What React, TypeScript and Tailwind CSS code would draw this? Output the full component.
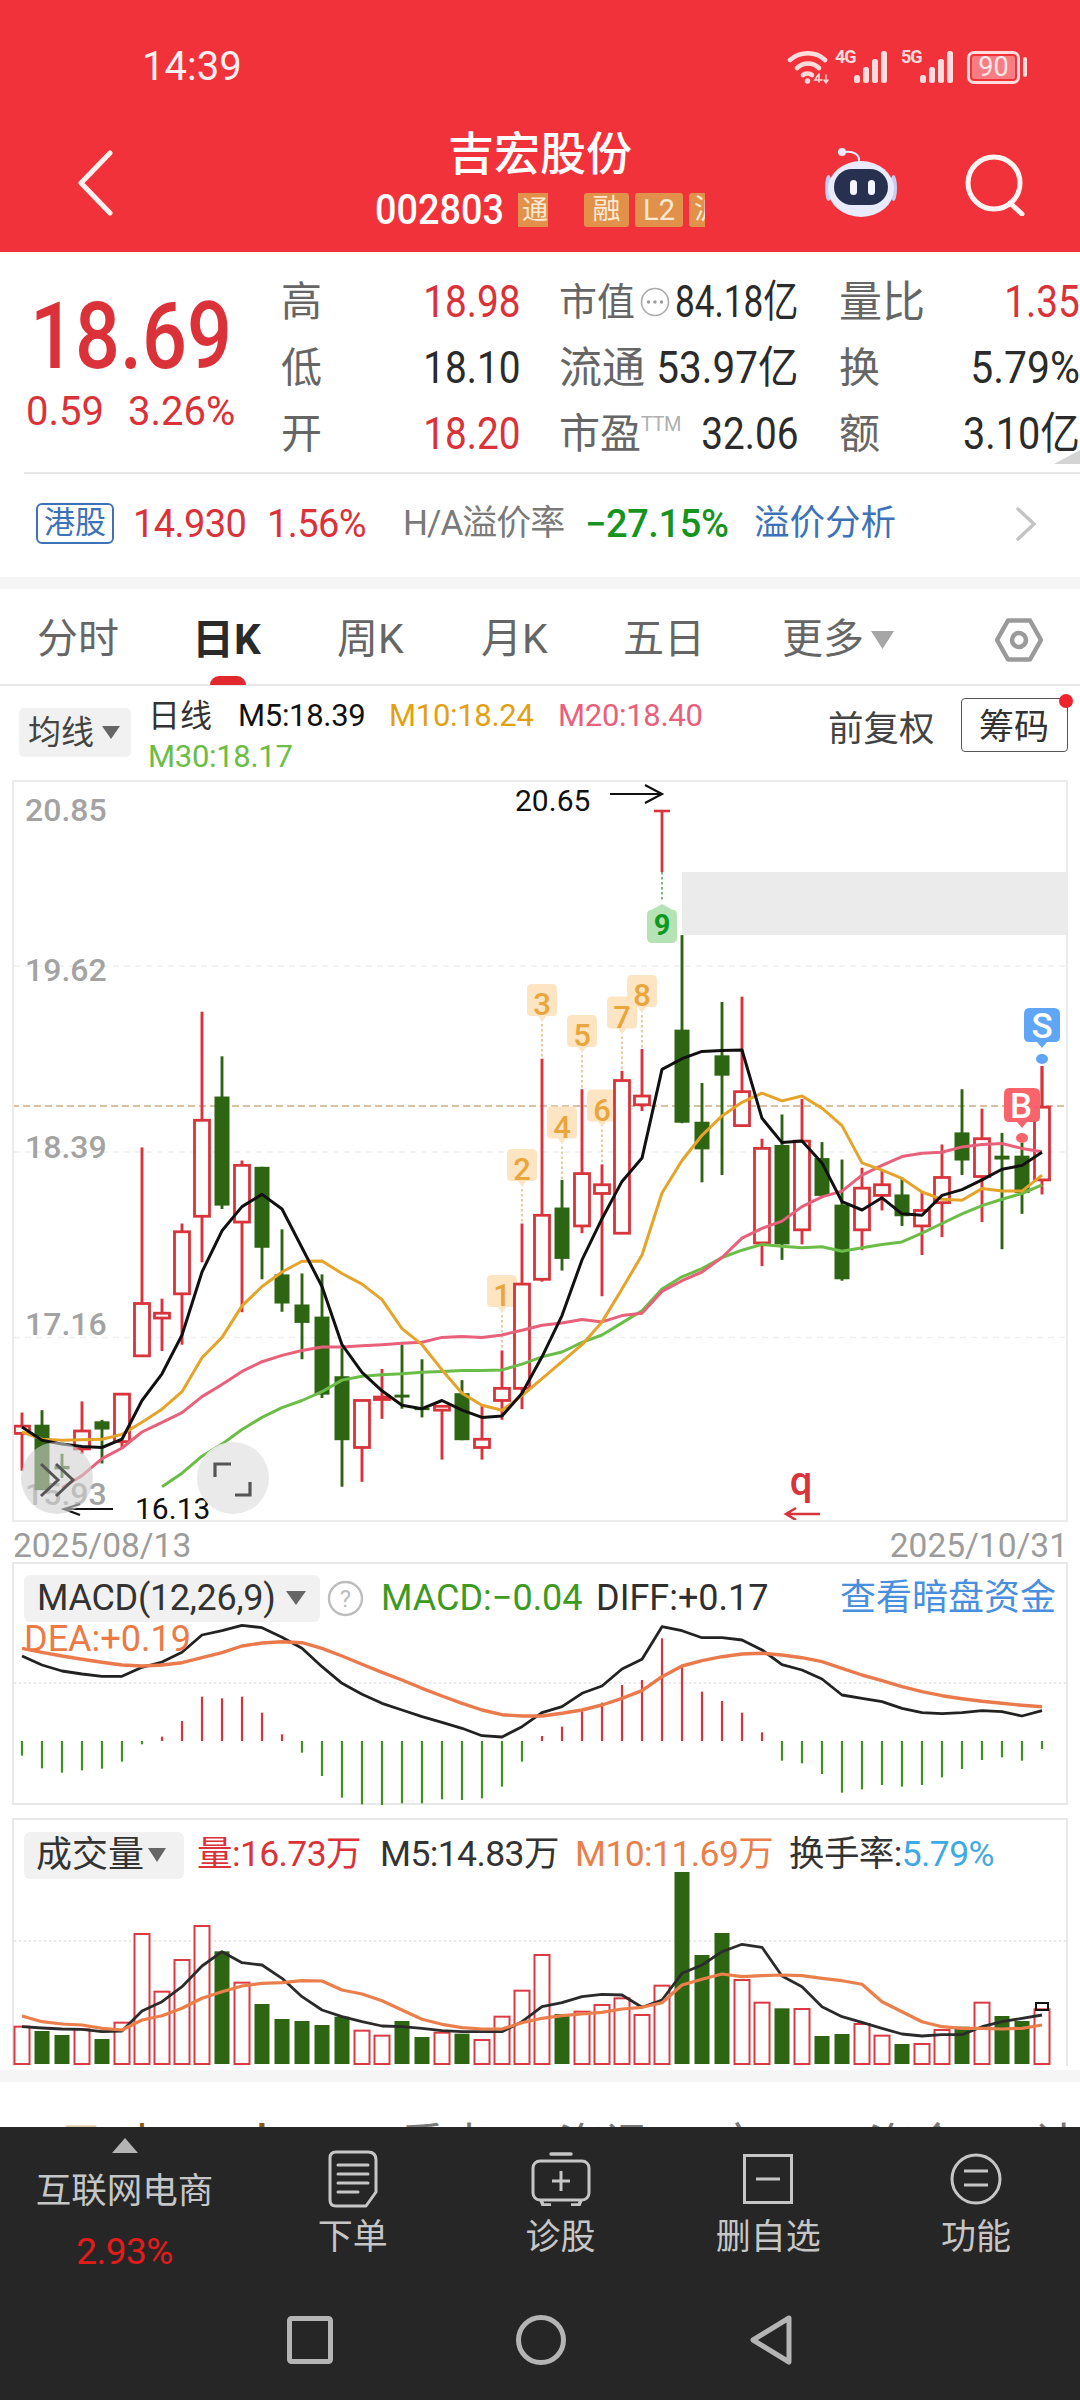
import React from 'react';

const RED = '#d8343c';
const GREEN = '#2e6513';
const cx = (i: number) => 22 + 20 * i;
const my = (z: number) => 780 + z / 2.063;
const dy = (z: number) => 1560 + z / 3;
const vy = (z: number) => 1810 + z / 3;
const pts = (arr: number[], f: (z: number) => number, start = 0) =>
  arr.map((z, k) => `${cx(k + start)},${f(z).toFixed(1)}`).join(' ');

type C = [string, number, number, number, number];
const candles: (C | null)[] = [
  ['r', 1305, 1425, 1333, 1348], ['g', 1300, 1465, 1330, 1465], ['g', 1390, 1440, 1415, 1422], ['r', 1282, 1390, 1343, 1380],
  ['g', 1320, 1410, 1323, 1340], ['r', 1267, 1380, 1267, 1365], ['r', 758, 1190, 1080, 1188], ['r', 1070, 1178, 1100, 1110],
  ['r', 915, 1165, 932, 1060], ['r', 478, 995, 702, 900], ['g', 570, 885, 653, 878], ['r', 785, 1098, 795, 912],
  ['g', 798, 1030, 798, 965], ['g', 927, 1097, 1020, 1080], ['g', 1018, 1195, 1082, 1120], ['g', 1020, 1275, 1107, 1268],
  ['g', 1170, 1458, 1230, 1362], ['r', 1278, 1448, 1280, 1377], ['r', 1215, 1318, 1273, 1278], ['g', 1165, 1297, 1268, 1274],
  ['g', 1195, 1315, 1295, 1300], ['r', 1292, 1402, 1292, 1300], ['g', 1238, 1362, 1265, 1362], ['r', 1290, 1402, 1360, 1377],
  ['r', 1177, 1320, 1255, 1280], ['r', 915, 1298, 1040, 1255], ['r', 575, 1035, 898, 1030], ['g', 825, 1012, 882, 988],
  ['r', 638, 935, 812, 920], ['r', 793, 1065, 835, 853], ['r', 600, 935, 620, 935], ['r', 555, 683, 652, 670],
  null, ['g', 320, 708, 515, 707], ['g', 625, 830, 705, 762], ['g', 458, 815, 568, 610],
  ['r', 447, 715, 643, 713], ['r', 740, 1003, 760, 955], ['g', 690, 990, 753, 958], ['r', 658, 958, 745, 928],
  ['g', 747, 860, 780, 858], ['g', 783, 1033, 876, 1030], ['r', 800, 970, 842, 928], ['r', 805, 888, 835, 857],
  ['g', 820, 920, 855, 900], ['r', 850, 980, 888, 920], ['r', 752, 943, 820, 872], ['g', 638, 815, 727, 785],
  ['r', 678, 912, 740, 818], ['g', 728, 968, 775, 783], ['g', 748, 895, 775, 852], ['r', 590, 855, 675, 825],
];

const m5 = [1335, 1362, 1370, 1375, 1377, 1360, 1280, 1225, 1145, 1015, 930, 880, 855, 885, 965, 1045, 1165, 1222, 1260, 1290, 1297, 1280, 1300, 1315, 1312, 1265, 1190, 1105, 990, 905, 828, 780, 597, 575, 560, 558, 557, 698, 748, 745, 790, 870, 887, 862, 895, 898, 857, 845, 825, 803, 795, 768];
const m10 = [1345, 1360, 1362, 1361, 1360, 1350, 1325, 1298, 1262, 1192, 1150, 1085, 1045, 1015, 993, 992, 1018, 1040, 1072, 1132, 1165, 1217, 1265, 1290, 1300, 1270, 1235, 1200, 1165, 1118, 1050, 980, 852, 785, 733, 693, 665, 646, 662, 652, 677, 713, 790, 805, 822, 850, 865, 867, 843, 848, 848, 815];
const m20 = [1460, 1435, 1400, 1378, 1345, 1325, 1305, 1272, 1247, 1220, 1200, 1187, 1177, 1170, 1170, 1167, 1165, 1162, 1160, 1150, 1148, 1150, 1145, 1135, 1125, 1120, 1113, 1118, 1105, 1100, 1055, 1033, 1015, 985, 945, 925, 910, 880, 860, 848, 815, 795, 777, 770, 768, 757, 752, 750, 760, 767];
const m30 = [1458, 1430, 1395, 1370, 1340, 1315, 1295, 1280, 1262, 1238, 1230, 1227, 1225, 1222, 1220, 1218, 1218, 1217, 1205, 1190, 1180, 1160, 1145, 1120, 1095, 1050, 1025, 1008, 985, 970, 958, 962, 965, 963, 972, 965, 958, 953, 935, 915, 895, 878, 865, 853, 835];

const hist = [587, 625, 638, 631, 626, 605, 553, 530, 483, 410, 415, 410, 458, 523, 578, 648, 713, 733, 735, 730, 730, 718, 720, 715, 680, 605, 528, 500, 452, 428, 375, 360, 235, 317, 395, 423, 458, 517, 602, 610, 642, 698, 688, 675, 680, 675, 652, 627, 600, 592, 602, 567];
const diff = [288, 315, 333, 342, 349, 349, 322, 306, 277, 225, 212, 196, 203, 232, 265, 320, 370, 403, 430, 450, 470, 487, 505, 527, 531, 500, 458, 440, 400, 378, 327, 298, 200, 212, 233, 233, 240, 270, 314, 330, 357, 405, 415, 425, 445, 458, 461, 458, 452, 455, 468, 452];
const dea = [265, 277, 288, 298, 307, 315, 318, 315, 308, 293, 278, 258, 249, 245, 248, 265, 288, 313, 337, 360, 385, 408, 430, 450, 464, 468, 468, 460, 450, 435, 415, 392, 350, 318, 302, 290, 282, 280, 285, 293, 305, 325, 345, 362, 380, 395, 407, 416, 424, 430, 436, 440];

const vols: [string, number][] = ([
  ['r', 650], ['g', 663], ['g', 675], ['r', 658], ['g', 687], ['r', 638], ['r', 372], ['r', 545], ['r', 450], ['r', 348], ['g', 424], ['r', 518], ['g', 582],
  ['g', 627], ['g', 633], ['g', 645], ['g', 620], ['r', 662], ['r', 677], ['g', 633], ['g', 681], ['r', 668], ['g', 671], ['r', 690], ['r', 620], ['r', 542],
  ['r', 435], ['g', 612], ['r', 605], ['r', 585], ['r', 565], ['r', 615], ['r', 527], ['g', 186], ['g', 435], ['g', 369], ['r', 510], ['r', 578], ['g', 595],
  ['r', 597], ['g', 678], ['g', 672], ['r', 642], ['r', 677], ['g', 702], ['r', 702], ['r', 660], ['g', 650], ['r', 578], ['g', 618], ['g', 633], ['r', 598],
] as [string, number][]);
const vm5 = [650, 654, 657, 658, 665, 663, 603, 575, 530, 468, 425, 458, 465, 505, 560, 600, 620, 635, 648, 650, 655, 662, 665, 665, 665, 635, 590, 578, 560, 553, 555, 592, 570, 490, 465, 425, 403, 412, 498, 530, 590, 620, 637, 655, 672, 678, 674, 674, 650, 635, 625, 615];
const vm10 = [618, 635, 642, 645, 655, 660, 630, 617, 595, 565, 545, 528, 520, 518, 512, 513, 540, 552, 572, 600, 628, 643, 653, 657, 657, 638, 625, 617, 612, 607, 597, 592, 578, 525, 508, 492, 500, 497, 495, 497, 505, 512, 523, 575, 605, 635, 650, 655, 655, 657, 655, 645];

const tags: [string, number, number, number][] = [
  ['1', 24, 1295, 1177], ['2', 25, 1169, 915], ['3', 26, 1004, 575], ['4', 27, 1126.6, 825],
  ['5', 28, 1035, 638], ['6', 29, 1109.6, 793], ['7', 30, 1016.5, 600], ['8', 31, 995, 555],
];

function MainChart() {
  return (
    <svg viewBox="12 780 1056 742" width="1056" height="742" className="block">
      <rect x="682" y="872" width="386" height="63" fill="#ebebeb" />
      {[966, 1152, 1337.5].map((y) => (
        <line key={y} x1="14" x2="1066" y1={y} y2={y} stroke="#eeeeee" strokeWidth="1.5" strokeDasharray="6 5" />
      ))}
      <line x1="12" x2="1068" y1="1106" y2="1106" stroke="#c9ad86" strokeWidth="1.5" strokeDasharray="7 4" />
      <g fontFamily="Roboto, sans-serif" fontSize="32" fill="#a3a3a3" fontWeight="500">
        <text x="25" y="821">20.85</text>
        <text x="25" y="981">19.62</text>
        <text x="25" y="1158">18.39</text>
        <text x="25" y="1335">17.16</text>
        <text x="25" y="1505">15.93</text>
      </g>
      {tags.map(([t, i, c, w]) => (
        <g key={t}>
          <line x1={cx(i)} x2={cx(i)} y1={c + 20} y2={my(w)} stroke="#d9a860" strokeWidth="1.2" strokeDasharray="2.5 2.5" />
          <path d={`M${cx(i) - 15} ${c - 15} q0 -5 5 -5 h20 q5 0 5 5 v23 q0 4 -4 4 h-7 l-4 6 l-4 -6 h-7 q-4 0 -4 -4 z`} fill="#fde4c2" />
          <text x={cx(i)} y={c + 11} textAnchor="middle" fontFamily="Roboto, sans-serif" fontWeight="500" fontSize="31" fill="#e8a63c">{t}</text>
        </g>
      ))}
      <line x1="662" x2="662" y1="872" y2="902" stroke="#1f8a2b" strokeWidth="1.2" strokeDasharray="2.5 2.5" />
      <path d="M647 915 q0 -5 4 -5 l11 -6 l11 6 q4 0 4 5 v23 q0 5 -5 5 h-20 q-5 0 -5 -5 z" fill="#b6e3b6" />
      <text x="662" y="935" textAnchor="middle" fontFamily="Roboto, sans-serif" fontWeight="700" fontSize="29" fill="#0a9a1f">9</text>
      <line x1="662" x2="662" y1="811" y2="872" stroke={RED} strokeWidth="2.8" />
      <line x1="654" x2="670" y1="811" y2="811" stroke={RED} strokeWidth="2.6" />
      {candles.map((c, i) => {
        if (!c) return null;
        const [k, hi, lo, top, bot] = c;
        const col = k === 'r' ? RED : GREEN;
        const t = my(top);
        const b = my(bot);
        return (
          <g key={i}>
            <line x1={cx(i)} x2={cx(i)} y1={my(hi)} y2={my(lo)} stroke={col} strokeWidth="2.9" />
            <rect
              x={cx(i) - 7.5}
              y={t}
              width="15"
              height={Math.max(b - t, 1)}
              fill={k === 'r' ? '#ffffff' : GREEN}
              stroke={k === 'r' ? RED : 'none'}
              strokeWidth="2.8"
            />
          </g>
        );
      })}
      <polyline points={pts(m30, my, 7)} fill="none" stroke="#6bbd48" strokeWidth="3" strokeLinejoin="round" />
      <polyline points={pts(m20, my, 2)} fill="none" stroke="#e9607a" strokeWidth="3" strokeLinejoin="round" />
      <polyline points={pts(m10, my)} fill="none" stroke="#e6a32a" strokeWidth="3" strokeLinejoin="round" />
      <polyline points={pts(m5, my)} fill="none" stroke="#111111" strokeWidth="3" strokeLinejoin="round" />
      <text x="515" y="811" fontFamily="Roboto, sans-serif" fontSize="30" fill="#111111">20.65</text>
      <path d="M610 794 H662 M645 785 L662 794 L645 803" fill="none" stroke="#111111" strokeWidth="2.2" />
      <text x="135" y="1519" fontFamily="Roboto, sans-serif" fontSize="30" fill="#111111">16.13</text>
      <path d="M113 1509 H64 M80 1504 L64 1509 L80 1515" fill="none" stroke="#111111" strokeWidth="2.2" />
      <text x="801" y="1495" textAnchor="middle" fontFamily="Roboto, sans-serif" fontWeight="500" fontSize="40" fill={RED}>q</text>
      <path d="M820 1514 H786 M796 1508 L786 1514 L796 1520" fill="none" stroke={RED} strokeWidth="2.6" />
      <path d="M1029 1008 h25 q6 0 6 6 v23 q0 5 -5 5 h-8 l-5 6 l-5 -6 h-8 q-5 0 -5 -5 v-23 q0 -6 5 -6 z" fill="#5fa6f7" />
      <text x="1042" y="1038" textAnchor="middle" fontFamily="Roboto, sans-serif" fontWeight="500" fontSize="35" fill="#ffffff">S</text>
      <ellipse cx="1042" cy="1059" rx="6" ry="5" fill="#5fa6f7" />
      <path d="M1009 1088 h25 q6 0 6 6 v23 q0 5 -5 5 h-8 l-5 6 l-5 -6 h-8 q-5 0 -5 -5 v-23 q0 -6 5 -6 z" fill="#f8636c" />
      <text x="1021" y="1118" textAnchor="middle" fontFamily="Roboto, sans-serif" fontWeight="500" fontSize="35" fill="#ffffff">B</text>
      <ellipse cx="1022" cy="1138" rx="6" ry="5" fill="#f8636c" />
      <line x1="1042" x2="1042" y1="1066" y2="1106" stroke={RED} strokeWidth="2.7" />
      <circle cx="57" cy="1478" r="36" fill="#d0d0d0" fillOpacity="0.6" />
      <path d="M41 1464 L58 1480 L41 1496 M56 1464 L73 1480 L56 1496" fill="none" stroke="#555555" strokeWidth="3" />
      <circle cx="233" cy="1478" r="36" fill="#e9e9e9" fillOpacity="0.95" />
      <path d="M231 1464 H215 V1477 M235 1495 H250 V1482" fill="none" stroke="#555555" strokeWidth="3.2" />
    </svg>
  );
}

function MacdChart() {
  return (
    <svg viewBox="12 1562 1056 243" width="1056" height="243" className="block">
      <line x1="14" x2="1066" y1="1683" y2="1683" stroke="#e2e2e2" strokeWidth="1.5" strokeDasharray="2 3" />
      {hist.map((z, i) => (
        <line key={i} x1={cx(i)} x2={cx(i)} y1={dy(543)} y2={dy(z)} stroke={z < 543 ? '#d8343c' : '#3f8f22'} strokeWidth="2.2" />
      ))}
      <polyline points={pts(diff, dy)} fill="none" stroke="#222222" strokeWidth="2.8" strokeLinejoin="round" />
      <polyline points={pts(dea, dy)} fill="none" stroke="#ea7a4b" strokeWidth="3.4" strokeLinejoin="round" />
    </svg>
  );
}

function VolumeChart() {
  return (
    <svg viewBox="12 1818 1056 248" width="1056" height="248" className="block">
      <line x1="14" x2="1066" y1="1941" y2="1941" stroke="#e2e2e2" strokeWidth="1.5" strokeDasharray="2 3" />
      {vols.map(([k, z], i) => {
        const t = vy(z);
        const b = vy(762);
        return (
          <rect
            key={i}
            x={cx(i) - 7.5}
            y={t}
            width="15"
            height={b - t}
            fill={k === 'r' ? '#ffffff' : GREEN}
            stroke={k === 'r' ? '#dc3a42' : 'none'}
            strokeWidth="2"
          />
        );
      })}
      <polyline points={pts(vm5, vy)} fill="none" stroke="#2b2b2b" strokeWidth="2.8" strokeLinejoin="round" />
      <polyline points={pts(vm10, vy)} fill="none" stroke="#ea7f4b" strokeWidth="3.2" strokeLinejoin="round" />
      <rect x="1036" y="2003" width="12" height="7" fill="none" stroke="#111111" strokeWidth="2" />
    </svg>
  );
}

function Robot() {
  return (
    <svg width="72" height="70" viewBox="0 0 72 70">
      <path d="M34 14 C35 6 28 3 20 4" fill="none" stroke="#eef0ff" strokeWidth="2" />
      <circle cx="17" cy="4" r="4" fill="#e9ebff" />
      <ellipse cx="3.5" cy="40" rx="3.5" ry="13" fill="#c9cdf5" />
      <ellipse cx="68.5" cy="40" rx="3.5" ry="13" fill="#c9cdf5" />
      <ellipse cx="36" cy="41" rx="33" ry="28" fill="#e9ebfd" />
      <rect x="9" y="21" width="54" height="36" rx="18" fill="#27304e" />
      <rect x="25" y="32" width="7" height="15" rx="3.5" fill="#f4f6ff" />
      <rect x="43" y="32" width="7" height="15" rx="3.5" fill="#f4f6ff" />
    </svg>
  );
}

function Signal({ label }: { label: string }) {
  return (
    <div className="relative w-[53px] h-[34px]">
      <span className="absolute left-0 top-[-3px] text-[18px] font-bold leading-[20px] tracking-[-1px] text-[#ffdcdc]">{label}</span>
      <svg width="34" height="32" viewBox="0 0 34 32" className="absolute right-0 top-[1px]">
        <g fill="#ffdcdc">
          <rect x="0" y="24" width="6" height="8" rx="2.5" />
          <rect x="9" y="16" width="6" height="16" rx="2.5" />
          <rect x="18" y="8" width="6" height="24" rx="2.5" />
          <rect x="27" y="0" width="6" height="32" rx="2.5" />
        </g>
      </svg>
    </div>
  );
}

function Wifi() {
  return (
    <svg width="42" height="36" viewBox="0 0 42 36" fill="none" stroke="#ffdcdc" strokeWidth="4.6" strokeLinecap="round">
      <path d="M3 11 C13 2 29 2 38 11" />
      <path d="M10 19 C16 13 26 13 32 19" />
      <path d="M16 26 C18 24 23 24 25 26" />
      <circle cx="20.5" cy="32" r="2" fill="#ffdcdc" strokeWidth="1.5" />
      <path d="M31 26 L28 31 H35 M32 33 V25" strokeWidth="1.6" />
      <path d="M39 26 V33 M37 31 L39 34 L41 31" strokeWidth="1.4" />
    </svg>
  );
}

function Row({ label, value, red, big, sx = 'scale-x-[.88]' }: { label: React.ReactNode; value: string; red?: boolean; big?: boolean; sx?: string }) {
  return (
    <div className="flex items-center justify-between h-[66px] whitespace-nowrap">
      <span className={big ? 'text-[43px] text-[#666666] leading-none shrink-0' : 'text-[41px] text-[#666666] leading-none shrink-0'}>{label}</span>
      <span className={(red ? 'text-[#db3138] ' : 'text-[#2b2b2b] ') + sx + ' origin-right text-[44px] leading-none shrink-0'}>{value}</span>
    </div>
  );
}

function Tab({ w, children, active }: { w: string; children: React.ReactNode; active?: boolean }) {
  return (
    <div className={w + ' relative h-full flex items-center shrink-0'}>
      <span className={active ? 'text-[42px] font-bold text-[#2a2a2a] leading-none' : 'text-[41px] text-[#666666] leading-none'}>{children}</span>
    </div>
  );
}

function ToolItem({ icon, label }: { icon: React.ReactNode; label: string }) {
  return (
    <div className="flex flex-col items-center">
      <div className="h-[60px] flex items-center justify-center mt-[22px]">{icon}</div>
      <span className="mt-[8px] text-[35px] leading-[42px] text-[#c6c6c6]">{label}</span>
    </div>
  );
}

export default function App() {
  const font = "font-['Roboto','Noto_Sans_CJK_SC',sans-serif]";
  return (
    <div className={font + ' w-[1080px] h-[2400px] flex flex-col bg-white overflow-hidden'}>
      <header className="h-[252px] bg-[#f2323a] flex flex-col shrink-0">
        <div className="h-[132px] flex items-center pl-[142px] pt-[2px]">
          <span className="text-[40px] text-[#fff0ee] leading-none w-[645px]">14:39</span>
          <Wifi />
          <div className="ml-[6px] flex gap-[2px] items-center">
            <Signal label="4G" />
            <div className="w-[9px]" />
            <Signal label="5G" />
          </div>
          <div className="ml-[13px] w-[53px] h-[33px] border-[3px] border-[#ffdcdc] rounded-[7px] flex items-center justify-center p-[2px]">
            <span className="w-full h-full bg-[#f87c82] rounded-[2px] flex items-center justify-center text-[27px] text-[#ffe8e8] leading-none">90</span>
          </div>
          <div className="ml-[3px] w-[4px] h-[20px] rounded-full bg-[#ffdcdc]" />
        </div>
        <div className="h-[120px] flex items-start">
          <div className="w-[240px] pl-[77px] pt-[18px] shrink-0">
            <svg width="36" height="66" viewBox="0 0 36 66" fill="none" stroke="#fff2f0" strokeWidth="5" strokeLinecap="round" strokeLinejoin="round">
              <path d="M33 3 L4 33 L33 63" />
            </svg>
          </div>
          <div className="flex-1 flex flex-col items-center">
            <span className="mt-[-2px] text-[46px] leading-[48px] text-white font-medium">吉宏股份</span>
            <div className="mt-[14px] w-[330px] h-[36px] flex items-center overflow-hidden shrink-0">
              <span className="text-[42px] leading-none font-medium text-white scale-x-[.9] origin-left w-[143px] shrink-0">002803</span>
              <span className="w-[30px] h-[34px] bg-[#e2914a] text-[#fbe9d3] text-[26px] leading-[34px] flex justify-end overflow-hidden shrink-0">通</span>
              <span className="ml-[36px] w-[45px] h-[34px] rounded-[3px] bg-[#e2914a] text-[#fbe9d3] text-[28px] leading-[34px] text-center shrink-0">融</span>
              <span className="ml-[6px] w-[48px] h-[34px] rounded-[3px] bg-[#e2914a] text-[#fbe9d3] text-[29px] leading-[34px] text-center shrink-0">L2</span>
              <span className="ml-[6px] w-[44px] h-[34px] rounded-[3px] bg-[#e2914a] text-[#fbe9d3] text-[28px] leading-[34px] pl-[5px] shrink-0">沪</span>
            </div>
          </div>
          <div className="w-[240px] flex pt-[16px] shrink-0">
            <div className="-ml-[15px] shrink-0"><Robot /></div>
            <svg className="ml-[68px] mt-[6px] shrink-0" width="62" height="62" viewBox="0 0 62 62" fill="none" stroke="#fff4f2" strokeWidth="5">
              <circle cx="29" cy="29" r="26" />
              <path d="M45 49 L57 60" strokeLinecap="round" />
            </svg>
          </div>
        </div>
      </header>

      <section className="h-[222px] ml-[24px] flex pt-[17px] border-b-2 border-[#e8e8e8] relative shrink-0">
        <div className="w-[257px] shrink-0 flex flex-col">
          <span className="ml-[6px] mt-[22px] text-[92px] leading-[92px] font-medium text-[#db3138] scale-x-[.86] origin-left whitespace-nowrap">18.69</span>
          <div className="mt-[7px] ml-[2px] flex text-[40px] leading-[44px] text-[#db3138] whitespace-nowrap">
            <span className="w-[102px]">0.59</span>
            <span>3.26%</span>
          </div>
        </div>
        <div className="w-[240px] mr-[38px] shrink-0">
          <Row label="高" value="18.98" red />
          <Row label="低" value="18.10" />
          <Row label="开" value="18.20" red />
        </div>
        <div className="w-[240px] mr-[40px] shrink-0">
          <Row
            label={
              <span className="flex items-center">
                <span className="text-[38px]">市值</span>
                <svg className="ml-[5px]" width="30" height="30" viewBox="0 0 30 30" fill="#9a9a9a" stroke="none">
                  <circle cx="15" cy="15" r="13.5" fill="none" stroke="#aaaaaa" strokeWidth="1.6" />
                  <circle cx="8.5" cy="15" r="1.7" />
                  <circle cx="15" cy="15" r="1.7" />
                  <circle cx="21.5" cy="15" r="1.7" />
                </svg>
              </span>
            }
            value="84.18亿"
            sx="scale-x-[.8] -ml-[45px]"
          />
          <Row big label="流通" value="53.97亿" sx="scale-x-[.92] -ml-[5px]" />
          <Row
            label={
              <span className="flex items-start">
                <span>市盈</span>
                <span className="text-[20px] text-[#b0b0b0] tracking-[-0.5px]">TTM</span>
              </span>
            }
            value="32.06"
          />
        </div>
        <div className="w-[241px] shrink-0">
          <Row big label="量比" value="1.35" red />
          <Row label="换" value="5.79%" sx="scale-x-[.93]" />
          <Row label="额" value="3.10亿" sx="scale-x-[.9]" />
        </div>
        <svg className="absolute right-0 bottom-[8px]" width="26" height="14" viewBox="0 0 26 14">
          <path d="M0 14 L26 14 L26 0 Z" fill="#d4d4d4" />
        </svg>
      </section>

      <div className="h-[103px] flex items-center pl-[36px] pb-[4px] shrink-0 whitespace-nowrap">
        <span className="w-[78px] h-[41px] border-2 border-[#3d72b8] rounded-[6px] text-[#3d72b8] text-[31px] leading-[36px] text-center shrink-0">港股</span>
        <span className="ml-[19px] w-[134px] text-[38px] text-[#db3138] leading-none tracking-[-0.6px] shrink-0">14.930</span>
        <span className="w-[136px] text-[38px] text-[#db3138] leading-none tracking-[-0.6px] shrink-0">1.56%</span>
        <span className="w-[182px] text-[35px] text-[#7a7a7a] leading-none tracking-[-1px] shrink-0">H/A溢价率</span>
        <span className="w-[169px] text-[38px] font-medium text-[#16941f] leading-none tracking-[-0.4px] shrink-0">−27.15%</span>
        <span className="w-[262px] text-[35.5px] text-[#3d72b8] leading-none shrink-0">溢价分析</span>
        <svg width="20" height="34" viewBox="0 0 20 34" fill="none" stroke="#c4c4c4" strokeWidth="3.5" strokeLinecap="round">
          <path d="M2 2 L18 17 L2 32" />
        </svg>
      </div>
      <div className="h-[12px] bg-[#f5f5f5] shrink-0" />

      <div className="h-[97px] flex items-center pl-[37px] border-b-2 border-[#e8e8e8] shrink-0 relative pt-[6px]">
        <Tab w="w-[155px]">分时</Tab>
        <Tab w="w-[145px]" active>
          日K
          <i className="absolute left-[18px] bottom-[-1px] w-[36px] h-[9px] rounded-t-full rounded-b-[2px] bg-[#e1282f] block" />
        </Tab>
        <Tab w="w-[144px]">周K</Tab>
        <Tab w="w-[142px]">月K</Tab>
        <Tab w="w-[159px]">五日</Tab>
        <Tab w="w-[89px]">更多</Tab>
        <svg width="23" height="18" viewBox="0 0 23 18" className="shrink-0"><path d="M0 0 H23 L11.5 18 Z" fill="#a6a6a6" /></svg>
        <svg className="ml-[101px] shrink-0" width="48" height="44" viewBox="0 0 48 44" fill="none" stroke="#9a9a9a" strokeWidth="4.5">
          <path d="M13 2.5 H35 L46 22 L35 41.5 H13 L2 22 Z" strokeLinejoin="round" />
          <circle cx="24" cy="22" r="7" />
        </svg>
      </div>

      <div className="h-[94px] flex items-start shrink-0">
        <div className="ml-[19px] mt-[22px] w-[112px] h-[49px] bg-[#f1f1f1] rounded-[5px] flex items-center pl-[9px] shrink-0">
          <span className="text-[33px] leading-none text-[#444444]">均线</span>
          <svg className="ml-[8px]" width="18" height="13" viewBox="0 0 18 13"><path d="M0 0 H18 L9 13 Z" fill="#666666" /></svg>
        </div>
        <div className="ml-[17px] mt-[12px] w-[560px] flex flex-col shrink-0 whitespace-nowrap">
          <div className="flex text-[31px] leading-[36px] tracking-[-0.3px]">
            <span className="w-[90px] text-[32px] text-[#333333] tracking-normal">日线</span>
            <span className="w-[151px] text-[#111111]">M5:18.39</span>
            <span className="w-[169px] text-[#e3a012]">M10:18.24</span>
            <span className="text-[#ea5f7c]">M20:18.40</span>
          </div>
          <span className="mt-[5px] text-[31px] leading-[36px] tracking-[-0.3px] text-[#6abd45]">M30:18.17</span>
        </div>
        <span className="ml-[120px] mt-[22px] text-[35.5px] leading-[42px] text-[#444444] shrink-0">前复权</span>
        <div className="relative ml-[26px] mt-[12px] w-[107px] h-[54px] pt-[5px] border-[1.5px] border-[#555555] rounded-[4px] flex items-center justify-center text-[35px] leading-none text-[#333333] shrink-0">
          筹码
          <i className="absolute right-[-6px] top-[-5px] w-[14px] h-[14px] rounded-full bg-[#f0222d] block" />
        </div>
      </div>

      <div className="relative mx-[12px] h-[742px] shrink-0 outline-2 outline-[#ebebeb] -outline-offset-2">
        <MainChart />
      </div>
      <div className="h-[40px] pl-[13px] pr-[12px] pt-[7px] flex items-center justify-between text-[33.5px] leading-none text-[#9c9c9c] shrink-0">
        <span>2025/08/13</span>
        <span>2025/10/31</span>
      </div>

      <div className="relative mx-[12px] h-[243px] border-2 border-[#e8e8e8] shrink-0 whitespace-nowrap">
        <div className="absolute -left-[2px] -top-[2px]"><MacdChart /></div>
        <div className="relative flex items-center pt-[9px] pl-[10px] h-[59px]">
          <div className="w-[296px] h-[47px] bg-[#f1f1f1] rounded-[6px] flex items-center pl-[13px] shrink-0">
            <span className="w-[249px] text-[36px] leading-none text-[#333333] tracking-[-0.3px]">MACD(12,26,9)</span>
            <svg width="20" height="14" viewBox="0 0 20 14"><path d="M0 0 H20 L10 14 Z" fill="#666666" /></svg>
          </div>
          <svg className="ml-[7px] shrink-0" width="37" height="37" viewBox="0 0 37 37" fill="none">
            <circle cx="18.5" cy="18.5" r="16.5" stroke="#bdbdbd" strokeWidth="2.4" />
            <text x="18.5" y="27" textAnchor="middle" fontSize="24" fontFamily="Roboto, sans-serif" fill="#bdbdbd">?</text>
          </svg>
          <span className="ml-[17px] w-[215px] text-[36px] leading-none text-[#3c9a22] shrink-0">MACD:−0.04</span>
          <span className="w-[244px] text-[36px] leading-none text-[#2f2f2f] shrink-0">DIFF:+0.17</span>
          <span className="text-[36px] leading-none text-[#4a8fdd] shrink-0">查看暗盘资金</span>
        </div>
        <div className="relative pl-[10px] -mt-[4px] text-[36px] leading-[40px] text-[#ec7a46]">DEA:+0.19</div>
      </div>

      <div className="h-[13px] shrink-0" />

      <div className="relative mx-[12px] h-[248px] border-x-2 border-t-2 border-[#e8e8e8] shrink-0 whitespace-nowrap">
        <div className="absolute -left-[2px] -top-[2px]"><VolumeChart /></div>
        <div className="relative flex items-center pt-[10px] pl-[10px] h-[60px]">
          <div className="w-[160px] h-[47px] bg-[#f1f1f1] rounded-[6px] flex items-center pl-[12px] shrink-0">
            <span className="w-[112px] text-[36px] leading-none text-[#333333]">成交量</span>
            <svg width="18" height="14" viewBox="0 0 18 14"><path d="M0 0 H18 L9 14 Z" fill="#666666" /></svg>
          </div>
          <div className="ml-[13px] flex text-[35.5px] leading-none tracking-[-0.6px]">
            <span className="w-[183px] text-[#db3138]">量:16.73万</span>
            <span className="w-[195px] text-[#333333]">M5:14.83万</span>
            <span className="w-[214px] text-[#ea7f4b]">M10:11.69万</span>
            <span className="text-[#333333]">换手率:<span className="text-[#3fa9e6]">5.79%</span></span>
          </div>
        </div>
      </div>

      <div className="h-[4px] shrink-0" />
      <div className="h-[12px] bg-[#f5f5f5] shrink-0" />
      <div className="h-[45px] relative flex overflow-hidden shrink-0 pt-[40px] text-[46px] leading-none text-[#777777] whitespace-nowrap">
        <span className="ml-[58px] w-[65px] text-[#d9c9a8] shrink-0">日</span>
        <span className="w-[120px] text-[#8a5a12] shrink-0">卜</span>
        <span className="w-[157px] font-medium text-[#8a5a12] shrink-0">卜P</span>
        <span className="w-[158px] shrink-0">重大</span>
        <span className="w-[158px] shrink-0">资讯</span>
        <span className="w-[152px] shrink-0">市</span>
        <span className="w-[165px] shrink-0">资金</span>
        <span className="shrink-0">计</span>
      </div>

      <footer className="flex-1 bg-[#262626] flex flex-col">
        <div className="h-[153px] flex shrink-0 whitespace-nowrap">
          <div className="w-[249px] flex flex-col items-center shrink-0">
            <svg className="mt-[11px]" width="26" height="15" viewBox="0 0 26 15"><path d="M13 0 L26 15 H0 Z" fill="#b4b4b4" /></svg>
            <span className="mt-[17px] text-[35.5px] leading-[42px] text-[#c6c6c6]">互联网电商</span>
            <span className="mt-[18px] text-[37px] leading-[44px] text-[#e21b1b] tracking-[-0.5px]">2.93%</span>
          </div>
          <div className="flex-1 grid grid-cols-4">
            <ToolItem
              label="下单"
              icon={
                <svg width="50" height="58" viewBox="0 0 50 58" fill="none" stroke="#c6c6c6" strokeWidth="3" strokeLinejoin="round">
                  <path d="M8 2 H40 Q48 2 48 10 V42 L38 56 H8 Q2 56 2 50 V8 Q2 2 8 2 Z" />
                  <path d="M10 15 H40 M10 24 H40 M10 33 H40 M10 42 H30" strokeLinecap="round" />
                </svg>
              }
            />
            <ToolItem
              label="诊股"
              icon={
                <svg width="60" height="54" viewBox="0 0 60 54" fill="none" stroke="#c6c6c6" strokeWidth="3">
                  <path d="M20 2 H40" strokeWidth="3.5" strokeLinecap="round" />
                  <rect x="2" y="9" width="56" height="39" rx="7" />
                  <path d="M30 19 V39 M21 29 H39" />
                  <path d="M10 48 L12 53 H20 M50 48 L48 53 H40" strokeWidth="3.5" />
                </svg>
              }
            />
            <ToolItem
              label="删自选"
              icon={
                <svg width="50" height="50" viewBox="0 0 50 50" fill="none" stroke="#c6c6c6" strokeWidth="3">
                  <rect x="1.5" y="1.5" width="47" height="47" />
                  <path d="M13 25 H37" />
                </svg>
              }
            />
            <ToolItem
              label="功能"
              icon={
                <svg width="52" height="52" viewBox="0 0 52 52" fill="none" stroke="#c6c6c6" strokeWidth="3">
                  <circle cx="26" cy="26" r="24" />
                  <path d="M14 18 H38 M14 32 H38" />
                </svg>
              }
            />
          </div>
        </div>
        <div className="flex-1 flex items-center pl-[287px]">
          <svg width="46" height="48" viewBox="0 0 46 48" fill="none" stroke="#b4b4b4" strokeWidth="5">
            <rect x="2.5" y="2.5" width="41" height="43" rx="2" />
          </svg>
          <svg className="ml-[183px]" width="50" height="50" viewBox="0 0 50 50" fill="none" stroke="#b4b4b4" strokeWidth="5">
            <circle cx="25" cy="25" r="22.5" />
          </svg>
          <svg className="ml-[184px]" width="42" height="50" viewBox="0 0 42 50" fill="none" stroke="#b4b4b4" strokeWidth="5" strokeLinejoin="round">
            <path d="M39 3 L3 25 L39 47 Z" />
          </svg>
        </div>
      </footer>
    </div>
  );
}
